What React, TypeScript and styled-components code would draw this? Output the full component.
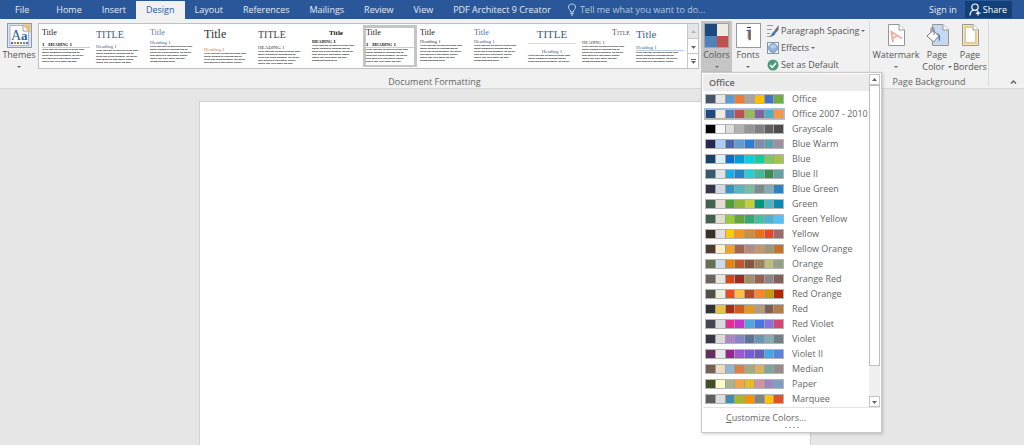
import React from "react";
import styled, { createGlobalStyle, css } from "styled-components";

const GlobalStyle = createGlobalStyle`
  * { box-sizing: border-box; }
  body { margin: 0; background: #e6e6e6; font-family: "Open Sans", "Noto Sans", sans-serif; font-size: 9px; color: #555; }
  button, input { font: inherit; color: inherit; border: 0; padding: 0; margin: 0; background: none; }
  svg { display: block; flex: none; }
`;

const Window = styled.div`
  display: flex;
  flex-direction: column;
  min-height: 100vh;
`;

const TitleBar = styled.header`
  display: flex;
  align-items: stretch;
  height: 19px;
  background: #2a579a;
  color: #e4ebf5;
`;

const Tabs = styled.nav`
  display: flex;
`;

const Tab = styled.button<{ $active?: boolean; $file?: boolean }>`
  padding: 0 ${(p) => (p.$file ? "17px 0 15px" : "10px")};
  white-space: nowrap;
  line-height: 18px;
  ${(p) =>
    p.$active &&
    css`
      margin-top: 1px;
      background: #f1f1f1;
      color: #2a579a;
    `}
`;

const TellMe = styled.label`
  display: flex;
  align-items: center;
  gap: 3px;
  flex: 1;
  padding-left: 6px;
  color: #b4c6e2;
`;

const TellMeInput = styled.input`
  flex: 1;
  min-width: 0;
  outline: none;
  &::placeholder { color: #b4c6e2; opacity: 1; }
`;

const Account = styled.div`
  display: flex;
  align-items: center;
  gap: 8px;
  padding-right: 12px;
`;

const ShareButton = styled.button`
  display: flex;
  align-items: center;
  gap: 2px;
  height: 17px;
  padding: 0 5px 0 4px;
  background: #124078;
  color: #fff;
`;

const Ribbon = styled.section`
  display: flex;
  height: 70px;
  padding-top: 2px;
  background: #f1f1f1;
  border-bottom: 1px solid #d5d5d5;
`;

const Group = styled.div<{ $grow?: boolean }>`
  display: flex;
  flex-direction: column;
  flex: ${(p) => (p.$grow ? "1 1 0" : "none")};
  min-width: 0;
  margin-bottom: 2px;
  border-right: 1px solid #d8d8d8;
`;

const GroupBody = styled.div`
  display: flex;
  align-items: flex-start;
  height: 56px;
`;

const GroupLabel = styled.div`
  text-align: center;
  line-height: 9px;
  color: #666;
`;

const LargeButton = styled.button<{ $width: number; $pressed?: boolean }>`
  display: flex;
  flex-direction: column;
  align-items: center;
  width: ${(p) => p.$width}px;
  height: 52px;
  padding-top: 2px;
  line-height: 12px;
  white-space: nowrap;
  background: ${(p) => (p.$pressed ? "#c5c5c5" : "none")};
`;

const LargeLabel = styled.span`
  display: flex;
  flex-direction: column;
  align-items: center;
  margin-top: 1px;
`;

const Line = styled.span`
  display: flex;
  align-items: center;
  justify-content: center;
  gap: 3px;
  height: 12px;
`;

const Caret = styled.span`
  border: 2px solid transparent;
  border-top-color: #666;
  border-bottom: 0;
`;

const Gallery = styled.div`
  display: flex;
  flex: 1;
  min-width: 0;
  height: 46px;
  margin: 2px 2px 0 0;
  border: 1px solid #c0c0c0;
  background: #fff;
`;

const Thumbs = styled.div`
  display: flex;
  flex: 1;
  min-width: 0;
  overflow: hidden;
`;

const Thumb = styled.button<{ $selected?: boolean }>`
  flex: none;
  display: flex;
  flex-direction: column;
  width: 54px;
  height: 42px;
  margin-top: 1px;
  padding-top: 1px;
  border: 3px solid ${(p) => (p.$selected ? "#c5c5c5" : "transparent")};
  border-bottom-width: 2px;
  font-family: "Liberation Serif", serif;
`;

const ThumbTitle = styled.span<{ $size: number; $color: string; $bold?: boolean; $rule?: boolean; $caps?: boolean; $align?: string }>`
  display: block;
  width: 100%;
  font-size: ${(p) => p.$size}px;
  line-height: ${(p) => (p.$size > 9 ? 11 : 8)}px;
  font-weight: ${(p) => (p.$bold ? 700 : 400)};
  font-variant: ${(p) => (p.$caps ? "small-caps" : "normal")};
  text-align: ${(p) => p.$align || "left"};
  color: ${(p) => p.$color};
  padding-bottom: ${(p) => (p.$rule ? 3 : 0)}px;
  border-bottom: ${(p) => (p.$rule ? "1px solid #dfe3b4" : "0")};
`;

const ThumbHeading = styled.span<{ $color: string; $bold?: boolean; $gap: number; $rule?: string; $caps?: boolean; $align?: string }>`
  display: block;
  width: 100%;
  margin-top: ${(p) => p.$gap}px;
  font-size: 5px;
  line-height: 5px;
  white-space: pre;
  font-weight: ${(p) => (p.$bold ? 700 : 400)};
  font-variant: ${(p) => (p.$caps ? "small-caps" : "normal")};
  text-align: ${(p) => p.$align || "left"};
  color: ${(p) => p.$color};
  border-bottom: ${(p) => (p.$rule ? `1px solid ${p.$rule}` : "0")};
`;

const ThumbText = styled.span`
  display: flex;
  flex-direction: column;
  width: 100%;
  font-family: "Liberation Sans", sans-serif;
  font-size: 2px;
  line-height: 3px;
  font-weight: 700;
  text-align: left;
  white-space: nowrap;
  color: #000;
`;

const GalleryScroll = styled.div`
  display: flex;
  flex-direction: column;
  width: 11px;
`;

const ScrollButton = styled.button<{ $disabled?: boolean }>`
  flex: 1;
  display: flex;
  align-items: center;
  justify-content: center;
  border-left: 1px solid #c8c8c8;
  border-bottom: 1px solid #c8c8c8;
  background: ${(p) => (p.$disabled ? "#e6e6e6" : "#fff")};
  &:last-child { border-bottom: 0; }
`;

const SmallStack = styled.div`
  display: flex;
  flex-direction: column;
  width: 105px;
  padding: 1px 0 0 3px;
`;

const SmallButton = styled.button`
  display: flex;
  align-items: center;
  gap: 2px;
  height: 17px;
  white-space: nowrap;
`;

const Anchor = styled.div`
  position: relative;
`;

const Menu = styled.div`
  position: absolute;
  top: 51px;
  left: 0;
  z-index: 1;
  width: 181px;
  padding: 1px;
  background: #fff;
  border: 1px solid #c8c8c8;
  box-shadow: 1px 1px 3px rgba(0, 0, 0, 0.2);
`;

const MenuScroller = styled.div`
  display: flex;
  border-bottom: 1px solid #e3e3e3;
`;

const MenuList = styled.div`
  flex: 1;
  min-width: 0;
  padding-bottom: 1px;
`;

const MenuHeader = styled.div`
  height: 17px;
  padding-left: 6px;
  line-height: 17px;
  font-weight: 600;
  color: #666;
  background: #ececec;
`;

const SchemeRow = styled.button`
  display: flex;
  align-items: center;
  gap: 8px;
  width: 100%;
  height: 15px;
  padding-left: 2px;
  text-align: left;
  white-space: nowrap;
  color: #666;
`;

const Strip = styled.span<{ $selected?: boolean }>`
  display: flex;
  flex: none;
  gap: 1px;
  width: 79px;
  height: 10px;
  border: 1px solid #b4b4b4;
  background: #a0a0a0;
  outline: ${(p) => (p.$selected ? "1px solid #a9c0e4" : "0")};
`;

const Swatch = styled.span<{ $color: string }>`
  flex: 1;
  background: ${(p) => p.$color};
`;

const MenuScrollbar = styled.div`
  display: flex;
  flex-direction: column;
  width: 11px;
  background: #f0f0f0;
`;

const BarArrow = styled.button`
  display: flex;
  align-items: center;
  justify-content: center;
  height: 11px;
  border: 1px solid #c4c4c4;
  background: #fff;
`;

const BarThumb = styled.div`
  height: 281px;
  border: 1px solid #bdbdbd;
  background: #fff;
`;

const BarTrack = styled.div`
  flex: 1;
`;

const CustomizeButton = styled.button`
  display: block;
  width: 100%;
  height: 18px;
  padding-left: 23px;
  text-align: left;
  color: #666;
`;

const Grip = styled.div`
  display: flex;
  justify-content: center;
  gap: 2px;
  height: 5px;
  padding-top: 1px;
`;

const GripDot = styled.span`
  width: 2px;
  height: 1px;
  background: #b0b0b0;
`;

const CollapseArea = styled.div`
  display: flex;
  align-items: flex-end;
  justify-content: flex-end;
  width: 35px;
  padding: 0 7px 3px 0;
`;

const Workspace = styled.main`
  flex: 1;
  display: flex;
  justify-content: center;
  padding: 12px 14px 0 0;
`;

const Page = styled.article`
  width: 100%;
  max-width: 612px;
  background: #fff;
  border: 1px solid #d2d2d2;
  border-bottom: 0;
`;

const tabs = ["Home", "Insert", "Design", "Layout", "References", "Mailings", "Review", "View", "PDF Architect 9 Creator"];

type Style = {
  title: string;
  size: number;
  color: string;
  bold?: boolean;
  titleRule?: boolean;
  titleCaps?: boolean;
  align?: string;
  heading: string;
  hColor: string;
  hBold?: boolean;
  hCaps?: boolean;
  hAlign?: string;
  gap: number;
  hRule?: string;
  selected?: boolean;
  lines: number;
};

const styles: Style[] = [
  { title: "Title", size: 8, color: "#222", heading: "1   Heading 1", hColor: "#111", hBold: true, hCaps: true, gap: 5, hRule: "#ccc", lines: 5 },
  { title: "TITLE", size: 10, color: "#3c5a85", heading: "Heading 1", hColor: "#3c5a85", gap: 4, lines: 5 },
  { title: "Title", size: 8, color: "#5b7fb0", heading: "Heading 1", hColor: "#3c5a85", gap: 3, lines: 6 },
  { title: "Title", size: 12, color: "#333", heading: "Heading 1", hColor: "#d07a3c", gap: 7, lines: 4 },
  { title: "TITLE", size: 10, color: "#444", heading: "HEADING 1", hColor: "#333", gap: 5, lines: 5 },
  { title: "Title", size: 7, color: "#111", bold: true, align: "center", heading: "Heading 1", hColor: "#111", hBold: true, hCaps: true, gap: 2, lines: 6 },
  { title: "Title", size: 8, color: "#222", heading: "1   Heading 1", hColor: "#111", hBold: true, hCaps: true, gap: 5, hRule: "#ccc", selected: true, lines: 5 },
  { title: "Title", size: 8, color: "#222", heading: "Heading 1", hColor: "#333", gap: 2, lines: 6 },
  { title: "Title", size: 8, color: "#4a6fa5", heading: "Heading 1", hColor: "#2f5496", gap: 2, lines: 6 },
  { title: "TITLE", size: 11, color: "#3c5a85", titleRule: true, align: "center", heading: "Heading 1", hColor: "#3c5a85", hAlign: "center", gap: 5, lines: 3 },
  { title: "Title", size: 8, color: "#555", titleCaps: true, align: "right", heading: "Heading 1", hColor: "#333", hCaps: true, gap: 3, lines: 6 },
  { title: "Title", size: 11, color: "#3c6291", heading: "Heading 1", hColor: "#3c6291", gap: 5, hRule: "#b8cce4", lines: 4 },
];

const sample = [
  "On the Insert tab, the galleries include items",
  "that are designed to coordinate with the",
  "overall look of your document. You can use",
  "these galleries to insert tables, headers,",
  "footers, lists, cover pages, and other",
  "document building blocks.",
];

const schemes: [string, string][] = [
  ["Office", "44546a e7e6e6 5b9bd5 ed7d31 a5a5a5 ffc000 4472c4 70ad47"],
  ["Office 2007 - 2010", "1f497d eeece1 4f81bd c0504d 9bbb59 8064a2 4bacc6 f79646"],
  ["Grayscale", "000000 f8f8f8 dddddd b2b2b2 969696 808080 5f5f5f 4d4d4d"],
  ["Blue Warm", "242852 accbf9 4a66ac 629dd1 297fd5 7f8fa9 5aa2ae 9d90a0"],
  ["Blue", "17406d dbeff9 0f6fc6 009dd9 0bd0d9 10cf9b 7cca62 a5c249"],
  ["Blue II", "335b74 dfe3e5 1cade4 2683c6 27ced7 42ba97 3e8853 62a39f"],
  ["Blue Green", "373545 cedbe6 3494ba 58b6c0 75bda7 7a8c8e 84acb6 2683c6"],
  ["Green", "455f51 e3ded1 549e39 8ab833 c0cf3a 029676 4ab5c4 0989b1"],
  ["Green Yellow", "455f51 e2dfcc 99cb38 63a537 37a76f 44c1a3 4eb3cf 51c3f9"],
  ["Yellow", "39302a e5dedb ffca08 f8931d ce8d3e ec7016 e64823 9c6a6a"],
  ["Yellow Orange", "4e3b30 fbeec9 f0a22e a5644e b58b80 c3986d a19574 c17529"],
  ["Orange", "637052 ccddea e48312 bd582c 865640 9b8357 c2bc80 94a088"],
  ["Orange Red", "696464 e9e5dc d34817 9b2d1f a28e6a 956251 918485 855d5d"],
  ["Red Orange", "505046 eeece1 e84c22 ffbd47 b64926 ff8427 cc9900 b22600"],
  ["Red", "323232 e5c243 a5300f d55816 e19825 b19c7d 7f5f52 b27d49"],
  ["Red Violet", "454551 d8d9dc e32d91 c830cc 4ea6dc 4775e7 8971e1 d54773"],
  ["Violet", "373545 dcd8dc ad84c6 8784c7 5d739a 6997af 84acb6 6f8183"],
  ["Violet II", "632e62 eae5eb 92278f 9b57d3 755dd9 665eb8 45a5ed 5982db"],
  ["Median", "775f55 ebddc3 94b6d2 dd8047 a5ab81 d8b25c 7ba79d 968c8c"],
  ["Paper", "444d26 fefac9 a5b592 f3a447 e7bc29 d092a7 9c85c0 809ec2"],
  ["Marquee", "5e5e5e dddddd 418ab3 a6b727 f69200 838383 fec306 df5327"],
];

const BulbIcon = () => (
  <svg width="10" height="13" viewBox="0 0 10 13" fill="none" stroke="#c9d6ea">
    <path d="M3.5 9V8C3.5 7 1.5 6.2 1.5 4.2C1.5 2.2 3 1 5 1S8.5 2.2 8.5 4.2C8.5 6.2 6.5 7 6.5 8V9Z" />
    <path d="M3.5 10.5H6.5M4 12H6" />
  </svg>
);

const ShareIcon = () => (
  <svg width="12" height="13" viewBox="0 0 12 13" fill="none" stroke="#fff" strokeWidth="1.2">
    <circle cx="6" cy="4.2" r="3.2" />
    <path d="M1 12.5C1 9.5 2.5 7.8 4.5 7M7.5 6.8L8.5 7.6M9 8V12.500M6.800 10.200H11.500" />
  </svg>
);

const ThemesIcon = () => (
  <svg width="25" height="25" viewBox="0 0 25 25">
    <rect x="0.5" y="0.5" width="24" height="24" fill="#dbe3ef" stroke="#8a9bb3" />
    <path d="M15 1.500H23.500V10Z" fill="#eebf76" />
    <path d="M3 2.500H16L21.500 8V22.500H3Z" fill="#fff" stroke="#8a9bb3" strokeWidth="0.700" />
    <path d="M16 2.500V8H21.500" fill="#fff" stroke="#777" strokeWidth="0.700" />
    <text x="4" y="17" fontFamily="Liberation Serif, serif" fontSize="14" fill="#2f6093">A</text>
    <text x="14" y="17" fontFamily="Liberation Serif, serif" fontSize="13" fontWeight="700" fill="#2f6093">a</text>
    <g>
      {["#3a6db5", "#e0763a", "#d94a3f", "#6a9e46", "#3a9fc4", "#7a5aa6"].map((c, i) => (
        <rect key={c} x={4 + i * 3} y="19" width="2" height="2" fill={c} />
      ))}
    </g>
  </svg>
);

const ColorsIcon = () => (
  <svg width="25" height="25" viewBox="0 0 25 25">
    <rect width="25" height="25" fill="#a3a3a3" />
    <rect x="1" y="1" width="12" height="12" fill="#1f497d" />
    <rect x="13" y="1" width="11" height="12" fill="#eeece1" />
    <rect x="1" y="13" width="12" height="11" fill="#4f81bd" />
    <rect x="13" y="13" width="11" height="11" fill="#c0504d" />
  </svg>
);

const FontsIcon = () => (
  <svg width="25" height="25" viewBox="0 0 25 25">
    <rect x="0.5" y="0.5" width="24" height="24" fill="#fff" stroke="#8f9bb0" />
    <path d="M11 4.500H15" stroke="#333" />
    <path d="M10.500 7.500H13M12.300 7V16" stroke="#2f5b95" strokeWidth="1" fill="none" />
    <path d="M13 8V17.500" stroke="#e08a3a" strokeWidth="1" />
    <path d="M14 6.500V17" stroke="#222" strokeWidth="1.200" fill="none" />
  </svg>
);

const SpacingIcon = () => (
  <svg width="12" height="13" viewBox="0 0 12 13">
    <path d="M0 1.500H6M0 5.500H5M0 9.500H3M0 12.500H5" stroke="#999" />
    <path d="M11.500 1V6L8 9.500L6.500 8Z" fill="#6b7078" />
    <path d="M6.500 7.500L8.500 9.500C7.500 12 5 12.500 3 12C5 11 5 8.500 6.500 7.500Z" fill="#3f78b8" />
  </svg>
);

const EffectsIcon = () => (
  <svg width="12" height="12" viewBox="0 0 12 12">
    <rect x="0.5" y="0.5" width="11" height="11" fill="#f4f7fb" stroke="#8795ab" />
    <circle cx="6" cy="6" r="4.500" fill="#8fb0dc" stroke="#6486b8" strokeWidth="0.700" />
    <ellipse cx="6" cy="4.500" rx="2.800" ry="2" fill="#b5cceb" />
  </svg>
);

const CheckIcon = () => (
  <svg width="12" height="12" viewBox="0 0 12 12">
    <circle cx="6" cy="6" r="5.500" fill="#4a9b7d" />
    <path d="M3 6L5.300 8.300L9 4" stroke="#fff" strokeWidth="1.500" fill="none" />
  </svg>
);

const PageOutline = ({ fill }: { fill: string }) => (
  <>
    <path d="M0.500 0.500H11L16.500 6V21.500H0.500Z" fill={fill} stroke="#969696" />
    <path d="M11 0.500V6H16.500" fill="#fff" stroke="#969696" />
  </>
);

const WatermarkIcon = () => (
  <svg width="17" height="25" viewBox="0 -1 17 25">
    <PageOutline fill="#fff" />
    <path d="M5 18L3.500 8L14 14.500M4.500 14.500L9.500 11.500" stroke="#efb0a4" strokeWidth="2" fill="none" />
  </svg>
);

const PageColorIcon = () => (
  <svg width="23" height="25" viewBox="0 -1 23 25">
    <g transform="translate(6 0)"><PageOutline fill="#c5d9f0" /></g>
    <path d="M1 12L7 6.500L13 12L7.500 18Z" fill="#fff" stroke="#777" />
    <path d="M5 8.500V5C5 3 8 3 8 5V11" fill="none" stroke="#777" />
    <path d="M10.500 9C14 10 15.500 13 13 18C12.500 15 12.500 14 13 12Z" fill="#3f78b8" />
  </svg>
);

const BordersIcon = () => (
  <svg width="17" height="25" viewBox="0 -1 17 25">
    <PageOutline fill="#fff" />
    <path d="M10.500 2.500H2.500V19.500H14.500V6.500" fill="none" stroke="#f3cf86" strokeWidth="2" />
    <path d="M10.500 3.500H3.500V18.500H13.500V7" fill="none" stroke="#b5a88c" strokeWidth="0.500" />
  </svg>
);

const ArrowIcon = ({ up, bar, color = "#666" }: { up?: boolean; bar?: boolean; color?: string }) => (
  <svg width="5" height="5" viewBox="0 0 5 5">
    {bar && <path d="M0 0.500H5" stroke={color} />}
    <path d={up ? "M0 4L2.500 1L5 4Z" : "M0 2L2.500 5L5 2Z"} fill={color} />
  </svg>
);

export default function App() {
  return (
    <>
      <GlobalStyle />
      <Window>
        <TitleBar>
          <Tabs aria-label="Ribbon tabs">
            <Tab $file>File</Tab>
            {tabs.map((t) => (
              <Tab key={t} $active={t === "Design"}>{t}</Tab>
            ))}
          </Tabs>
          <TellMe>
            <BulbIcon />
            <TellMeInput aria-label="Tell me" placeholder="Tell me what you want to do..." />
          </TellMe>
          <Account>
            <button>Sign in</button>
            <ShareButton><ShareIcon />Share</ShareButton>
          </Account>
        </TitleBar>
        <Ribbon>
          <Group $grow>
            <GroupBody>
              <LargeButton $width={38}>
                <ThemesIcon />
                <LargeLabel><Line>Themes</Line><Line><Caret /></Line></LargeLabel>
              </LargeButton>
              <Gallery>
                <Thumbs>
                  {styles.map((s, i) => (
                    <Thumb key={i} $selected={s.selected}>
                      <ThumbTitle $size={s.size} $color={s.color} $bold={s.bold} $rule={s.titleRule} $caps={s.titleCaps} $align={s.align}>{s.title}</ThumbTitle>
                      <ThumbHeading $color={s.hColor} $bold={s.hBold} $gap={s.gap} $rule={s.hRule} $caps={s.hCaps} $align={s.hAlign}>{s.heading}</ThumbHeading>
                      <ThumbText>
                        {sample.slice(0, s.lines).map((line) => <span key={line}>{line}</span>)}
                      </ThumbText>
                    </Thumb>
                  ))}
                </Thumbs>
                <GalleryScroll>
                  <ScrollButton $disabled aria-label="Previous row"><ArrowIcon up color="#b5b5b5" /></ScrollButton>
                  <ScrollButton aria-label="Next row"><ArrowIcon /></ScrollButton>
                  <ScrollButton aria-label="More styles"><ArrowIcon bar /></ScrollButton>
                </GalleryScroll>
              </Gallery>
              <Anchor>
                <LargeButton $width={31} $pressed>
                  <ColorsIcon />
                  <LargeLabel><Line>Colors</Line><Line><Caret /></Line></LargeLabel>
                </LargeButton>
                <Menu>
                  <MenuScroller>
                    <MenuList>
                      <MenuHeader>Office</MenuHeader>
                      {schemes.map(([name, colors]) => (
                        <SchemeRow key={name}>
                          <Strip $selected={name === "Office 2007 - 2010"}>
                            {colors.split(" ").map((c, i) => <Swatch key={i} $color={`#${c}`} />)}
                          </Strip>
                          {name}
                        </SchemeRow>
                      ))}
                    </MenuList>
                    <MenuScrollbar>
                      <BarArrow aria-label="Scroll up"><ArrowIcon up /></BarArrow>
                      <BarThumb />
                      <BarTrack />
                      <BarArrow aria-label="Scroll down"><ArrowIcon /></BarArrow>
                    </MenuScrollbar>
                  </MenuScroller>
                  <CustomizeButton><u>C</u>ustomize Colors...</CustomizeButton>
                  <Grip><GripDot /><GripDot /><GripDot /><GripDot /></Grip>
                </Menu>
              </Anchor>
              <LargeButton $width={32}>
                <FontsIcon />
                <LargeLabel><Line>Fonts</Line><Line><Caret /></Line></LargeLabel>
              </LargeButton>
              <SmallStack>
                <SmallButton><SpacingIcon />Paragraph Spacing<Caret /></SmallButton>
                <SmallButton><EffectsIcon />Effects<Caret /></SmallButton>
                <SmallButton><CheckIcon />Set as Default</SmallButton>
              </SmallStack>
            </GroupBody>
            <GroupLabel>Document Formatting</GroupLabel>
          </Group>
          <Group>
            <GroupBody>
              <LargeButton $width={52}>
                <WatermarkIcon />
                <LargeLabel><Line>Watermark</Line><Line><Caret /></Line></LargeLabel>
              </LargeButton>
              <LargeButton $width={30}>
                <PageColorIcon />
                <LargeLabel><Line>Page</Line><Line>Color<Caret /></Line></LargeLabel>
              </LargeButton>
              <LargeButton $width={36}>
                <BordersIcon />
                <LargeLabel><Line>Page</Line><Line>Borders</Line></LargeLabel>
              </LargeButton>
            </GroupBody>
            <GroupLabel>Page Background</GroupLabel>
          </Group>
          <CollapseArea>
            <button aria-label="Collapse the ribbon">
              <svg width="7" height="6" viewBox="0 0 7 6" fill="none" stroke="#666" strokeWidth="1.500"><path d="M1 4.500L3.500 2L6 4.500" /></svg>
            </button>
          </CollapseArea>
        </Ribbon>
        <Workspace><Page aria-label="Document page" /></Workspace>
      </Window>
    </>
  );
}
